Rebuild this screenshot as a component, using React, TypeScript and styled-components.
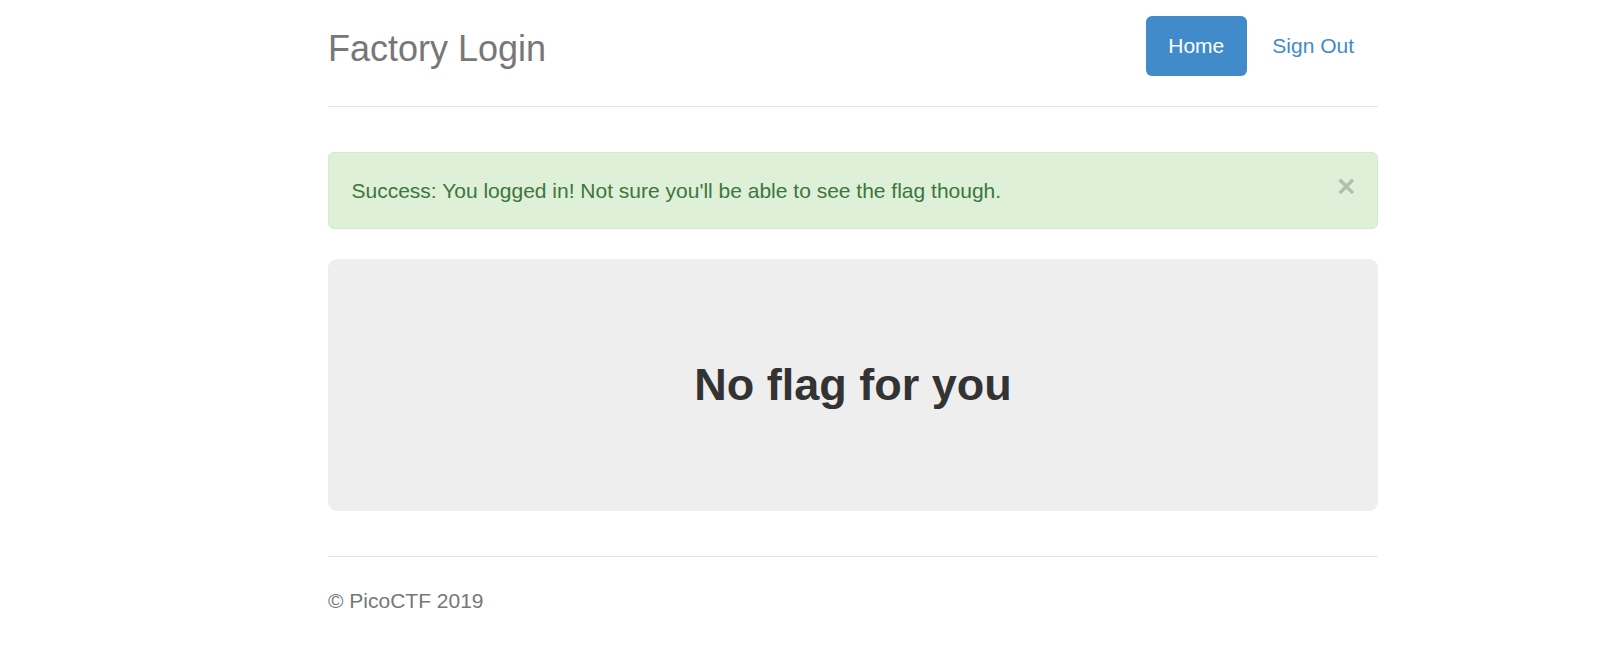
import React from "react";
import styled, { createGlobalStyle } from "styled-components";

const Global = createGlobalStyle`
  html, body { margin: 0; padding: 0; background: #fff; }
  body {
    font-family: "Liberation Sans", Arial, Helvetica, sans-serif;
    font-size: 21px;
    line-height: 30px;
    color: #333;
  }
`;

const Page = styled.div`
  padding: 16px 0 0 328px;
`;

const Container = styled.div`
  width: 1050px;
`;

const Header = styled.header`
  display: flex;
  justify-content: space-between;
  align-items: flex-start;
  padding-bottom: 30px;
  border-bottom: 1px solid #e5e5e5;
`;

const Title = styled.h3`
  margin: 0;
  padding-top: 5px;
  font-size: 36px;
  line-height: 55px;
  font-weight: 500;
  color: #777;
`;

const Nav = styled.nav`
  display: flex;
  gap: 3px;
  margin-right: 1.5px;
`;

const Pill = styled.a<{ $active?: boolean }>`
  display: block;
  height: 60px;
  box-sizing: border-box;
  padding: 15px 22.5px;
  border-radius: 6px;
  font-size: 21px;
  line-height: 30px;
  text-decoration: none;
  color: ${(p) => (p.$active ? "#fff" : "#428bca")};
  background: ${(p) => (p.$active ? "#428bca" : "transparent")};
`;

const Alert = styled.div`
  margin-top: 45px;
  display: flex;
  justify-content: space-between;
  align-items: flex-start;
  padding: 22.5px;
  border: 1.5px solid #d6e9c6;
  border-radius: 6px;
  background: #dff0d8;
  color: #3c763d;
`;

const Close = styled.span`
  margin-top: -5px;
  margin-right: -1px;
  font-size: 31.5px;
  line-height: 1;
  font-weight: bold;
  color: #000;
  opacity: 0.2;
  text-shadow: 0 1.5px 0 #fff;
`;

const Jumbotron = styled.div`
  margin-top: 30px;
  height: 252px;
  display: flex;
  align-items: center;
  justify-content: center;
  background: #eee;
  border-radius: 9px;
`;

const Heading = styled.h2`
  margin: 0;
  font-size: 45px;
  line-height: 50px;
  font-weight: bold;
  color: #333;
`;

const Footer = styled.footer`
  margin-top: 45px;
  padding-top: 28.5px;
  border-top: 1px solid #e5e5e5;
  color: #777;
`;

const FooterText = styled.p`
  margin: 0;
`;

export default function App() {
  return (
    <>
      <Global />
      <Page>
        <Container>
          <Header>
            <Title>Factory Login</Title>
            <Nav>
              <Pill $active>Home</Pill>
              <Pill>Sign Out</Pill>
            </Nav>
          </Header>
          <Alert>
            <span>Success: You logged in! Not sure you'll be able to see the flag though.</span>
            <Close>×</Close>
          </Alert>
          <Jumbotron>
            <Heading>No flag for you</Heading>
          </Jumbotron>
          <Footer>
            <FooterText>© PicoCTF 2019</FooterText>
          </Footer>
        </Container>
      </Page>
    </>
  );
}
